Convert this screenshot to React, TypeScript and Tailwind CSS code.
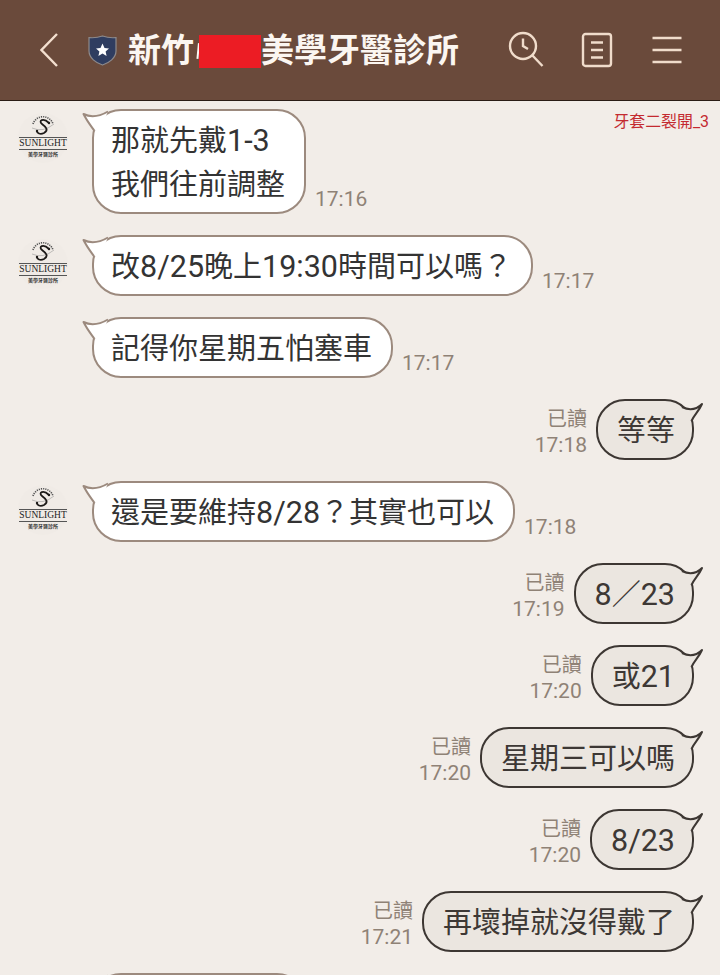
const font = { fontFamily: 'Roboto, "Noto Sans CJK TC", sans-serif' };

function Mixed({ text }: { text: string }) {
  return (
    <>
      {text.split(/([0-9:\-\/]+)/).map((part, i) =>
        i % 2 === 1 ? (
          <span key={i} className="text-[30.5px]">
            {part}
          </span>
        ) : (
          <span key={i}>{part}</span>
        )
      )}
    </>
  );
}

function LeftTail() {
  return (
    <svg className="absolute left-[-13px] top-[-2px] overflow-visible" width="34" height="28" viewBox="-13 -2 34 28" fill="none">
      <path d="M14 0.5 C8 4 -1 8 -10.5 3 C-7 10 -3 15 0.5 20 L8 14 Z" fill="#ffffff" />
      <path d="M14 0.5 C8 4 -1 8 -10.5 3 C-7 10 -3 15 0.5 20" stroke="#9c8a7e" strokeWidth="2" strokeLinejoin="round" />
    </svg>
  );
}

function RightTail() {
  return (
    <svg className="absolute right-[-13px] top-[-2px] overflow-visible" width="34" height="28" viewBox="-21 -2 34 28" fill="none">
      <path d="M-10 6 C-2 10 4 9 10 3 C7 10 2 14 -0.5 20 L-8 14 Z" fill="#ebe6e0" />
      <path d="M-10 6 C-2 10 4 9 10 3 C7 10 2 14 -0.5 20" stroke="#3d3733" strokeWidth="2" strokeLinejoin="round" />
    </svg>
  );
}

function Avatar() {
  return (
    <div className="w-[50px] h-[50px] shrink-0 flex flex-col items-center mt-[4px] rounded-full bg-[#f0ebe6]">
      <svg width="28" height="24" viewBox="0 0 28 24" fill="none" className="overflow-visible">
        <path d="M4 11 A10.5 10.5 0 0 1 24 11" stroke="#555" strokeWidth="1.6" strokeDasharray="1.2 1" />
        <path d="M3 15 Q14 20 25 11" stroke="#888" strokeWidth="0.5" />
        <path d="M20 10 C14 4 9 8 13 11 C17 14 20 17 15 20 C11 22 8 20 8 18" stroke="#1d1a18" strokeWidth="1.8" />
        <circle cx="20" cy="10" r="1.2" fill="#1d1a18" />
        <circle cx="8" cy="18" r="1.2" fill="#1d1a18" />
      </svg>
      <div className="w-[48px] border-t border-b border-[#555] text-center text-[9.5px] leading-[11px] text-[#222]" style={{ fontFamily: '"Liberation Serif", serif' }}>
        SUNLIGHT
      </div>
      <div className="text-[5px] leading-[7px] text-[#333] font-bold" style={{ fontFamily: '"Noto Sans CJK TC", sans-serif' }}>
        美學牙醫診所
      </div>
    </div>
  );
}

function Left({ lines, time, avatar }: { lines: string[]; time: string; avatar?: boolean }) {
  return (
    <div className="flex items-start pl-[18px]">
      <div className="w-[50px] mr-[24px] shrink-0">{avatar && <Avatar />}</div>
      <div className="flex items-end gap-[9px]">
        <div className="relative bg-white border-2 border-[#9c8a7e] rounded-[29px] pl-[17px] pr-[19px] pt-[8px] pb-[5px] text-[29px] leading-[44px] text-[#333333] whitespace-nowrap">
          <LeftTail />
          <div className="relative">
            {lines.map((l) => (
              <div key={l} className="h-[44px]">
                <Mixed text={l} />
              </div>
            ))}
          </div>
        </div>
        <div className="text-[21px] leading-[26px] mb-[2px] text-[#8f8276]">{time}</div>
      </div>
    </div>
  );
}

function Right({ text, time }: { text: string; time: string }) {
  return (
    <div className="flex items-center justify-end pr-[26px] gap-[9px]">
      <div className="flex flex-col items-end text-[#8f8276] pt-[5px]">
        <div className="text-[20px] leading-[26px]">已讀</div>
        <div className="text-[21px] leading-[26px]">{time}</div>
      </div>
      <div className="relative bg-[#ebe6e0] border-2 border-[#3d3733] rounded-[29px] pl-[19px] pr-[17px] pt-[8px] pb-[5px] text-[29px] leading-[44px] text-[#3d3835] whitespace-nowrap">
        <RightTail />
        <div className="relative h-[44px]">
          <Mixed text={text} />
        </div>
      </div>
    </div>
  );
}

function Header() {
  return (
    <header className="h-[101px] bg-[#6a4a3b] border-b border-[#2a1c15] flex items-center shrink-0 pl-[40px] pb-[1px]">
      <svg width="18" height="34" viewBox="0 0 18 34" fill="none" className="mr-[30px]">
        <path d="M17 1 L1.5 17 L17 33" stroke="#f3dfcf" strokeWidth="2.4" />
      </svg>
      <svg width="29" height="31" viewBox="0 0 29 31" fill="none" className="mr-[11px] mt-[2px]">
        <path d="M14.5 1 C19 2.6 24 3 28 2.6 V16 C28 23 21 28 14.5 30 C8 28 1 23 1 16 V2.6 C5 3 10 2.6 14.5 1 Z" fill="#2f3d60" stroke="#8d8a8c" strokeWidth="1.2" />
        <path d="M14.5 8.5 L16.5 13 L21 13.4 L17.6 16.5 L18.6 21 L14.5 18.6 L10.4 21 L11.4 16.5 L8 13.4 L12.5 13 Z" fill="#ffffff" />
      </svg>
      <div className="flex items-center text-[33px] leading-[40px] font-bold text-[#fbf6f1] whitespace-nowrap w-[331px] mt-[3px]">
        <span>新竹</span>
        <svg width="5" height="33" viewBox="0 0 5 33" fill="none">
          <path d="M5 8 L3.5 24" stroke="#fbf6f1" strokeWidth="2" />
        </svg>
        <span className="w-[63px] h-[33px] bg-[#ec1c24]" />
        <span>美學牙醫診所</span>
      </div>
      <svg width="38" height="38" viewBox="0 0 38 38" fill="none" className="ml-[48px] mr-[36px]" stroke="#f0dccb" strokeWidth="2.4">
        <circle cx="16" cy="15" r="13" />
        <path d="M16 7.5 V15 L21 18" />
        <path d="M25.5 24.5 L35.5 35" />
      </svg>
      <svg width="32" height="36" viewBox="0 0 32 36" fill="none" className="mr-[39px]" stroke="#f0dccb" strokeWidth="2.4">
        <rect x="2" y="2" width="28" height="32" rx="2.5" />
        <path d="M10 10.5 H22 M10 18 H22 M10 25.5 H22" />
      </svg>
      <svg width="30" height="28" viewBox="0 0 30 28" fill="none" stroke="#f0dccb" strokeWidth="2.6">
        <path d="M0.5 2 H29.5 M0.5 14 H29.5 M0.5 26 H29.5" />
      </svg>
    </header>
  );
}

export default function App() {
  return (
    <div className="relative w-[720px] h-[975px] overflow-hidden bg-[#f2ede8] flex flex-col" style={font}>
      <Header />
      <div className="absolute right-[11px] top-[112px] text-[15.9px] leading-[20px] text-[#c42a30]">牙套二裂開_3</div>
      <main className="flex flex-col gap-[21px] pt-[8px]">
        <Left avatar lines={['那就先戴1-3', '我們往前調整']} time="17:16" />
        <Left avatar lines={['改8/25晚上19:30時間可以嗎？']} time="17:17" />
        <Left lines={['記得你星期五怕塞車']} time="17:17" />
        <Right text="等等" time="17:18" />
        <Left avatar lines={['還是要維持8/28？其實也可以']} time="17:18" />
        <Right text="8／23" time="17:19" />
        <Right text="或21" time="17:20" />
        <Right text="星期三可以嗎" time="17:20" />
        <Right text="8/23" time="17:20" />
        <Right text="再壞掉就沒得戴了" time="17:21" />
        <Left lines={['　　　　　　']} time="" />
      </main>
    </div>
  );
}
